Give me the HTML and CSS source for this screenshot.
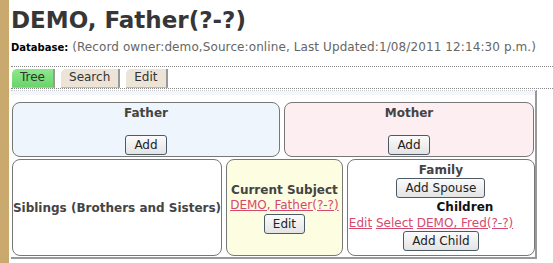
FILE: index.html
```html
<!DOCTYPE html>
<html lang="en">
<head>
  <meta charset="UTF-8">
  <title>DEMO, Father(?-?)</title>
  <link rel="stylesheet" href="styles.css">
</head>
<body>
  <div class="strip"></div>
  <div class="page">
    <h1 class="title">DEMO, Father(?-?)</h1>
    <div class="dbline"><strong>Database:</strong> (Record owner:demo,Source:online, Last Updated:1/08/2011 12:14:30 p.m.)</div>

    <div class="tabs">
      <span class="tab active">Tree</span>
      <span class="tab">Search</span>
      <span class="tab">Edit</span>
    </div>

    <div class="tree">
      <div class="row parents">
        <div class="box father">
          <div class="head">Father</div>
          <button class="btn">Add</button>
        </div>
        <div class="box mother">
          <div class="head">Mother</div>
          <button class="btn">Add</button>
        </div>
      </div>
      <div class="row kids">
        <div class="box siblings">
          <div class="head">Siblings (Brothers and Sisters)</div>
        </div>
        <div class="box subject">
          <div class="head">Current Subject</div>
          <a href="#">DEMO, Father(?-?)</a>
          <button class="btn">Edit</button>
        </div>
        <div class="box family">
          <div class="head">Family</div>
          <button class="btn">Add Spouse</button>
          <div class="children-head">Children</div>
          <div class="child-links"><a href="#">Edit</a> <a href="#">Select</a> <a href="#">DEMO, Fred(?-?)</a></div>
          <button class="btn">Add Child</button>
        </div>
      </div>
    </div>
  </div>
</body>
</html>
```

FILE: styles.css
```css
body {
  margin: 0;
  display: flex;
  min-height: 263px;
  font-family: "DejaVu Sans", Verdana, sans-serif;
  font-size: 12px;
  color: #444;
  background: #fff;
}
.strip {
  width: 9px;
  flex: none;
  background: #c9a96e;
}
.page {
  flex: 1;
  padding-left: 2px;
}
.title {
  margin: 5px 0 0 0;
  font-size: 23px;
  line-height: 30px;
  color: #363636;
}
.dbline {
  font-size: 12px;
  line-height: 14px;
  color: #666;
  margin-top: 5px;
  letter-spacing: 0.1px;
  white-space: nowrap;
}
.dbline strong {
  color: #000;
  font-size: 10px;
  letter-spacing: 0;
}
.tabs {
  margin-top: 11px;
  border-top: 1px dotted #888;
  border-bottom: 1px dotted #888;
  padding: 2px 0 0 1px;
  display: flex;
  gap: 6px;
  height: 19px;
}
.tab {
  font-size: 12px;
  line-height: 17px;
  padding: 0 8px 0 8px;
  background: #ece4d6;
  color: #333;
  border-radius: 5px 0 0 0;
  border-right: 2px solid #999;
  border-bottom: 1px solid #bbb;
}
.tab.active {
  background: linear-gradient(#8ee88e, #6ad46a);
}
.tree {
  margin-top: 1px;
  width: 523px;
  border-right: 2px solid #999;
  border-bottom: 2px solid #999;
  border-top: 1px dotted #ccc;
  padding: 11px 0 1px 1px;
  background: linear-gradient(#f3f7fc 0, #f3f7fc 4px, #fff 4px);
}
.row {
  display: flex;
  gap: 4px;
}
.parents {
  height: 55px;
}
.kids {
  margin-top: 2px;
  height: 97px;
}
.box {
  box-sizing: border-box;
  border: 1px solid #777;
  border-radius: 8px;
  display: flex;
  flex-direction: column;
  align-items: center;
}
.head {
  font-weight: bold;
  font-size: 12px;
  line-height: 16px;
  color: #444;
  white-space: nowrap;
}
.father {
  width: 268px;
  background: #eef5fd;
  padding-top: 2px;
}
.mother {
  width: 250px;
  background: #fdeef2;
  padding-top: 2px;
}
.parents .btn {
  margin-top: 14px;
}
.siblings {
  width: 210px;
  justify-content: center;
}
.subject {
  width: 118px;
  background: #fdfde2;
  justify-content: center;
}
.family {
  width: 190px;
  padding-top: 2px;
}
.btn {
  font-family: "DejaVu Sans", Verdana, sans-serif;
  font-size: 12px;
  line-height: 14px;
  color: #222;
  padding: 2px 8px;
  background: linear-gradient(#fbfbfb, #e4e4e4);
  border: 1px solid #4c5a66;
  border-radius: 3px;
}
a {
  color: #d6496f;
  font-size: 12px;
  line-height: 15px;
}
.subject .btn {
  margin-top: 1px;
}
.children-head {
  font-weight: bold;
  color: #111;
  font-size: 12px;
  line-height: 14px;
  margin-top: 2px;
  margin-left: 48px;
}
.child-links {
  align-self: flex-start;
  margin-left: 1px;
  margin-top: 1px;
  line-height: 16px;
  white-space: nowrap;
}
.child-links + .btn {
  margin-top: 0;
}
```
